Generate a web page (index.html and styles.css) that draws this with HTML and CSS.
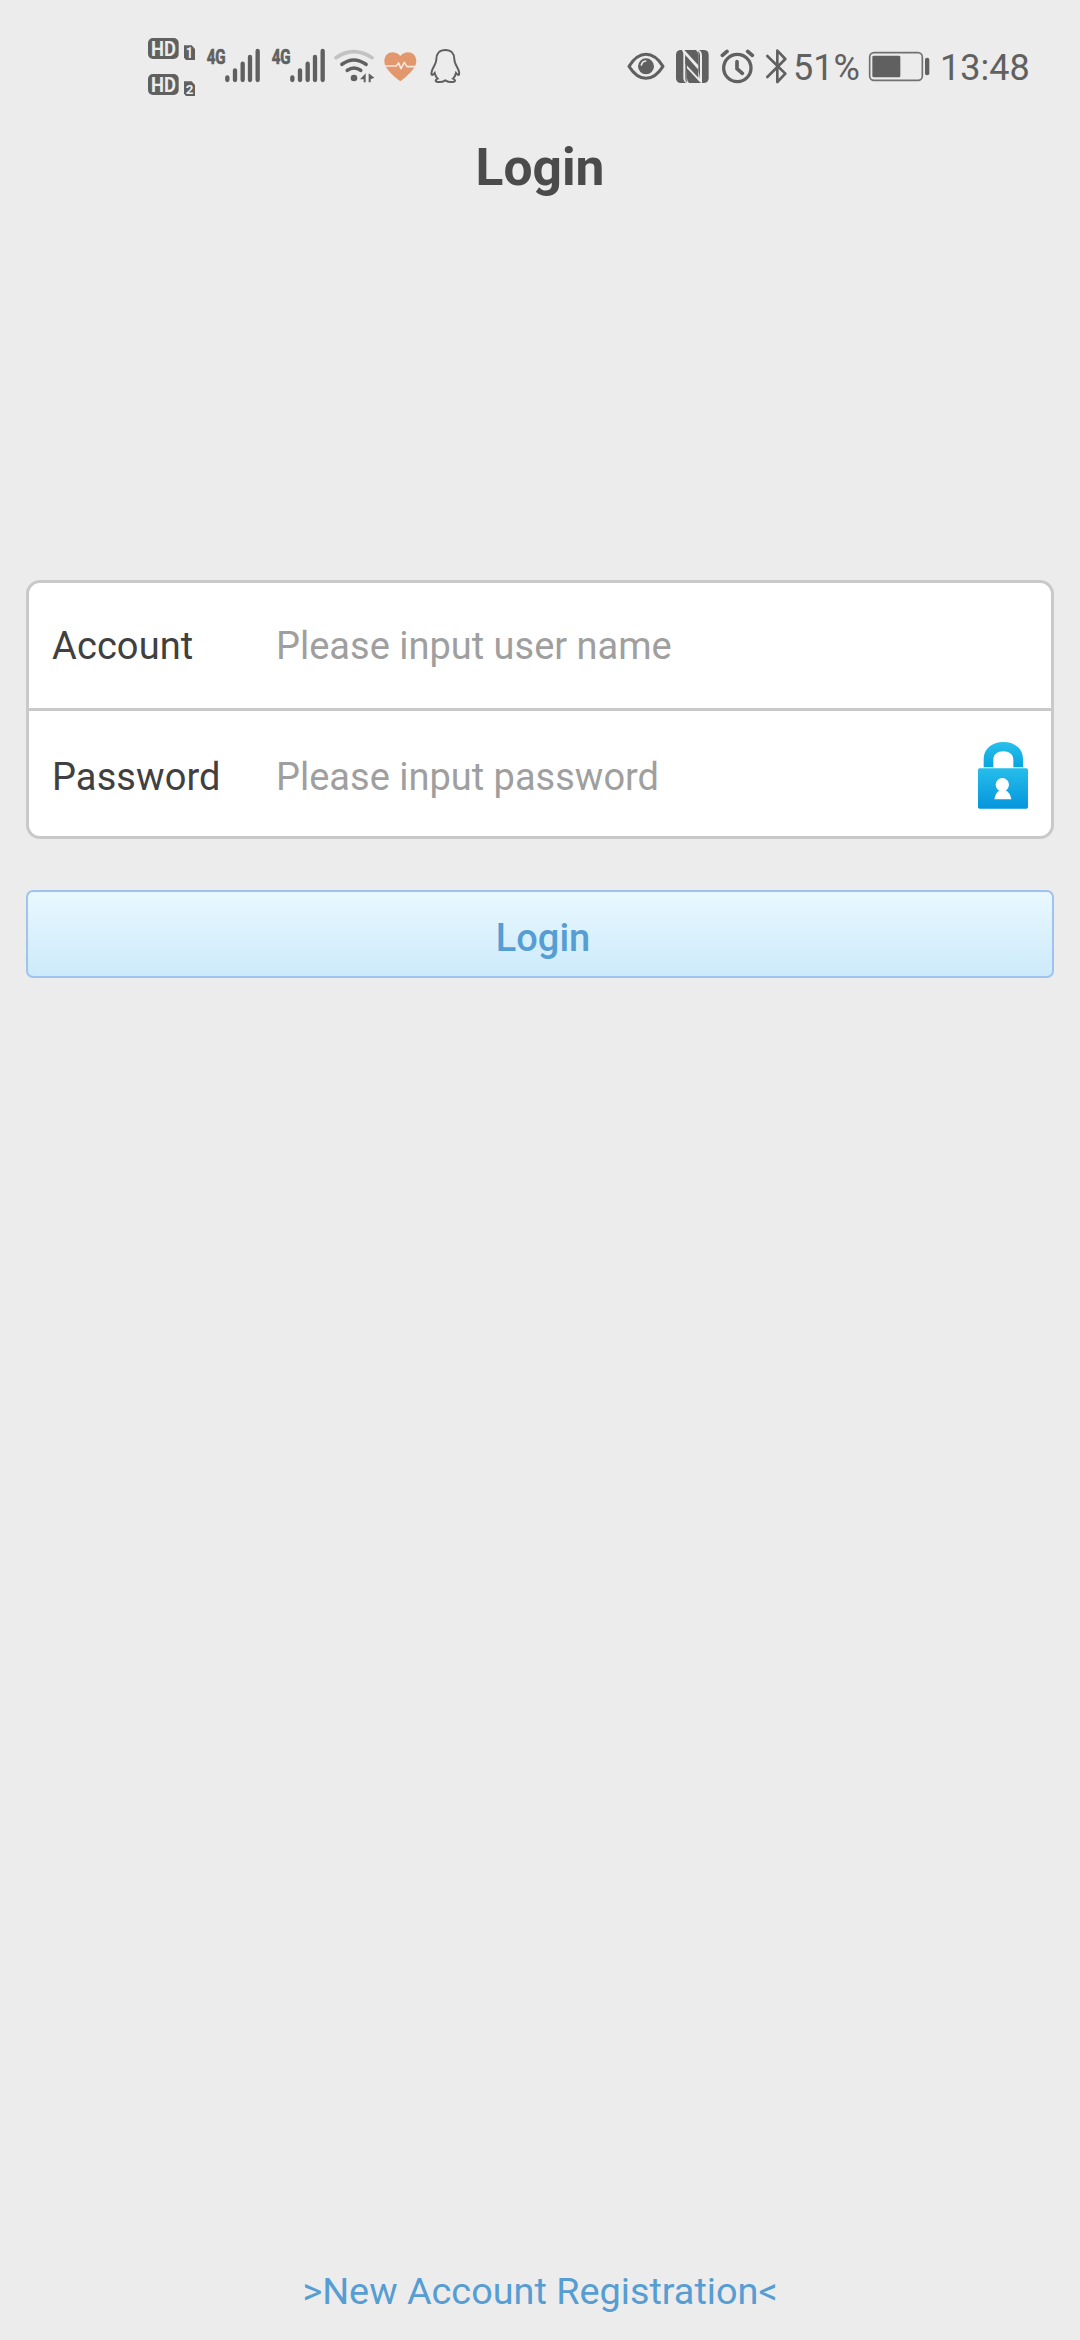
FILE: index.html
```html
<!DOCTYPE html>
<html lang="en">
<head>
<meta charset="utf-8">
<title>Login</title>
<link rel="stylesheet" href="styles.css">
</head>
<body>
<div class="screen">
  <div class="status">
    <div class="status-left">
      <svg class="hd" width="53" height="75" viewBox="18 0 159 225">
        <rect x="24" y="24" width="92" height="63" rx="15"/>
        <rect x="24" y="132" width="92" height="63" rx="15"/>
        <path d="M132 46h23l10 11v33h-27l-6-7zM132 154h23l10 11v33h-27l-6-7z"/>
        <g class="knockout">
          <text x="33" y="78" font-size="61" textLength="75" lengthAdjust="spacingAndGlyphs">HD</text>
          <text x="33" y="186" font-size="61" textLength="75" lengthAdjust="spacingAndGlyphs">HD</text>
          <text x="137" y="84" font-size="43" textLength="22" lengthAdjust="spacingAndGlyphs">1</text>
          <text x="137" y="191" font-size="41" textLength="23" lengthAdjust="spacingAndGlyphs">2</text>
        </g>
      </svg>
      <svg class="signal" width="57" height="75" viewBox="195 0 171 225">
        <text x="200" y="101" font-size="60" textLength="57" lengthAdjust="spacingAndGlyphs">4G</text>
        <path class="bars" d="M262 142v8M285 121v29M308 101v49M330 81v69M353 63v87"/>
      </svg>
      <svg class="signal second" width="57" height="75" viewBox="195 0 171 225">
        <text x="200" y="101" font-size="60" textLength="57" lengthAdjust="spacingAndGlyphs">4G</text>
        <path class="bars" d="M262 142v8M285 121v29M308 101v49M330 81v69M353 63v87"/>
      </svg>
      <svg class="wifi" width="41" height="75" viewBox="42 0 123 225">
        <path class="arc faint" d="M48 83Q101 47 156 83"/>
        <path class="arc" d="M66 103Q101 77 138 103M82 121Q102 107 122 121"/>
        <circle cx="102" cy="144" r="10"/>
        <path d="M137 130v27h-6v-9h-11zM146 130l17 13-11 5v9h-6z"/>
      </svg>
      <svg class="heart" width="35" height="75" viewBox="189 0 105 225">
        <path d="M241 154C224 141 193 117 193 94C193 65 225 58 241 78C257 58 289 65 289 94C289 117 258 141 241 154Z"/>
        <path class="pulse" d="M191 108h38l7-9 7 17 10-19 8 13h29"/>
      </svg>
      <svg class="penguin" width="31" height="75" viewBox="330 0 93 225">
        <path d="M376 60C359 60 349 71 349 88C349 96 346 101 343 107C337 118 332 127 335 134C337 136 341 133 344 129C346 137 349 142 353 146C345 149 345 155 354 156C363 157 370 155 376 151C382 155 389 157 398 156C407 155 407 149 399 146C403 142 406 137 408 129C411 133 415 136 417 134C420 127 415 118 409 107C406 101 403 96 403 88C403 71 393 60 376 60Z"/>
      </svg>
    </div>
    <div class="status-right">
      <svg class="eye" width="38" height="75" viewBox="36 0 114 225">
        <path class="lid" d="M42 109Q65 73 93 73Q121 73 144 109Q121 145 93 145Q65 145 42 109Z"/>
        <circle cx="93" cy="109" r="24"/>
        <path class="glint" d="M79 105Q82 94 92 93"/>
      </svg>
      <svg class="nfc" width="35" height="75" viewBox="180 0 105 225">
        <rect x="183" y="60" width="98" height="99" rx="14"/>
        <path class="gap" d="M201 60L208 60L250 106V76Q250 65 243 60H252Q261 65 261 78V160L255 157L216 115V144Q216 154 222 159H214Q205 154 205 143V70Z"/>
        <path d="M211 75L250 119V143L211 101Z"/>
        <path d="M211 72V145Q211 153 215 158L216 105ZM255 147V76Q255 68 250 62V119Z"/>
      </svg>
      <svg class="alarm" width="35" height="75" viewBox="315 0 105 225">
        <circle cx="367" cy="114" r="41"/>
        <path d="M366 95v21l16 14M322 76l14-12M398 64l14 12" stroke-width="11"/>
      </svg>
      <svg class="bluetooth" width="24" height="75" viewBox="450 0 72 225">
        <path d="M457 78l54 53-24 25V62l24 25-54 54"/>
      </svg>
      <span class="percent">51%</span>
      <svg class="battery" width="63" height="75" viewBox="264 0 189 225">
        <rect class="shell" x="269" y="68" width="158" height="83" rx="13"/>
        <rect x="277" y="77" width="84" height="65" rx="4"/>
        <rect x="435" y="83" width="13" height="53" rx="6"/>
      </svg>
      <span class="time">13:48</span>
    </div>
  </div>
  <h1 class="title">Login</h1>
  <form class="form">
    <div class="fields">
      <label class="row">
        <span class="label">Account</span>
        <input class="input" type="text" placeholder="Please input user name">
      </label>
      <label class="row">
        <span class="label">Password</span>
        <input class="input" type="password" placeholder="Please input password">
        <svg class="lock" width="50" height="67" viewBox="114 125 150 201">
          <defs>
            <linearGradient id="lock-top" x1="0" y1="0" x2="0" y2="1"><stop offset="0" stop-color="#29c0ea"/><stop offset="1" stop-color="#08a4e0"/></linearGradient>
            <linearGradient id="lock-body" x1="0" y1="0" x2="0" y2="1"><stop offset="0" stop-color="#25bdea"/><stop offset="1" stop-color="#0695dd"/></linearGradient>
          </defs>
          <path fill="url(#lock-top)" d="M131 201V177C131 145 156 125 190 125C224 125 249 145 249 177V201H220V178C220 162 207 153 190 153C173 153 160 162 160 178V201Z"/>
          <rect fill="url(#lock-body)" x="114" y="204" width="150" height="121" rx="5"/>
          <circle fill="#fff" cx="187" cy="253" r="20"/>
          <path fill="#fff" d="M179 270h18q14 8 17 27h-51q3-19 16-27z"/>
        </svg>
      </label>
    </div>
    <button class="submit" type="button">Login</button>
  </form>
  <a class="register">&gt;New Account Registration&lt;</a>
</div>
</body>
</html>
```
FILE: styles.css
```css
* { box-sizing: border-box; }
body { margin: 0; background: #ececec; font-family: Roboto, sans-serif; }
.screen { width: 1080px; height: 2340px; display: flex; flex-direction: column; }

.status { height: 105px; padding: 30px 0 0 146px; display: flex; color: #606060; fill: #606060; }
.status svg { display: block; flex: none; }
.status-left, .status-right { display: flex; height: 75px; }
.status-left { width: 481px; }
.signal { margin-left: 6px; }
.signal.second { margin-left: 8px; }
.bars { stroke: #606060; stroke-width: 13; stroke-linecap: round; }
.signal text { font-weight: 700; stroke: #606060; stroke-width: 2; }
.knockout { fill: #ececec; font-weight: 700; }
.wifi { margin-left: 7px; }
.arc { fill: none; stroke: #606060; stroke-width: 11; stroke-linecap: round; }
.faint { stroke: #c2c2c2; }
.heart { margin-left: 8px; fill: #e2976c; }
.pulse { fill: none; stroke: #f5e5dc; stroke-width: 5; stroke-linejoin: round; }
.penguin { margin-left: 12px; fill: none; stroke: #606060; stroke-width: 6; }
.lid { fill: none; stroke: #606060; stroke-width: 9; stroke-linejoin: round; }
.glint { fill: none; stroke: #ececec; stroke-width: 5; stroke-linecap: round; }
.nfc, .alarm { margin-left: 10px; }
.gap { fill: #ececec; }
.alarm, .bluetooth { fill: none; stroke: #606060; stroke-width: 10; stroke-linecap: round; }
.bluetooth { margin-left: 10px; stroke-width: 8; stroke-linejoin: round; }
.percent, .time { font-size: 36px; line-height: 77px; white-space: nowrap; }
.percent { width: 75px; margin-left: 4px; }
.shell { fill: none; stroke: #707070; stroke-width: 5; }
.time { margin-left: 9px; }

.title { margin: 0; height: 126px; line-height: 126px; text-align: center; font-size: 51.5px; font-weight: 700; color: #4b4b4b; }

.form { margin: 349px 26px 0; }
.fields { height: 259px; border: 3px solid #c9c9c9; border-radius: 14px; background: #fff; overflow: hidden; }
.row { height: 128px; display: flex; align-items: center; padding: 0 23px; }
.row:first-child { border-bottom: 3px solid #c9c9c9; }
.row + .row .label, .row + .row .input { padding-top: 4px; height: 50px; }
.label { width: 224px; font-size: 38px; line-height: 46px; letter-spacing: 0.1px; color: #404040; }
.input { flex: 1; min-width: 0; height: 46px; border: 0; padding: 0; background: none; outline: 0; font: 38px/46px Roboto, sans-serif; color: #404040; }
.input::placeholder { color: #9f9f9f; opacity: 1; }
.submit { display: block; width: 100%; height: 88px; margin-top: 51px; padding: 8px 0 0 6px; border: 2px solid #9fc3f0; border-radius: 7px; background: linear-gradient(#e9f8ff, #cceafa); font: 500 38px/46px Roboto, sans-serif; color: #559dd3; }
.register { margin: auto 0 26px; text-align: center; font-size: 37.8px; line-height: 46px; color: #559dd3; }
```
